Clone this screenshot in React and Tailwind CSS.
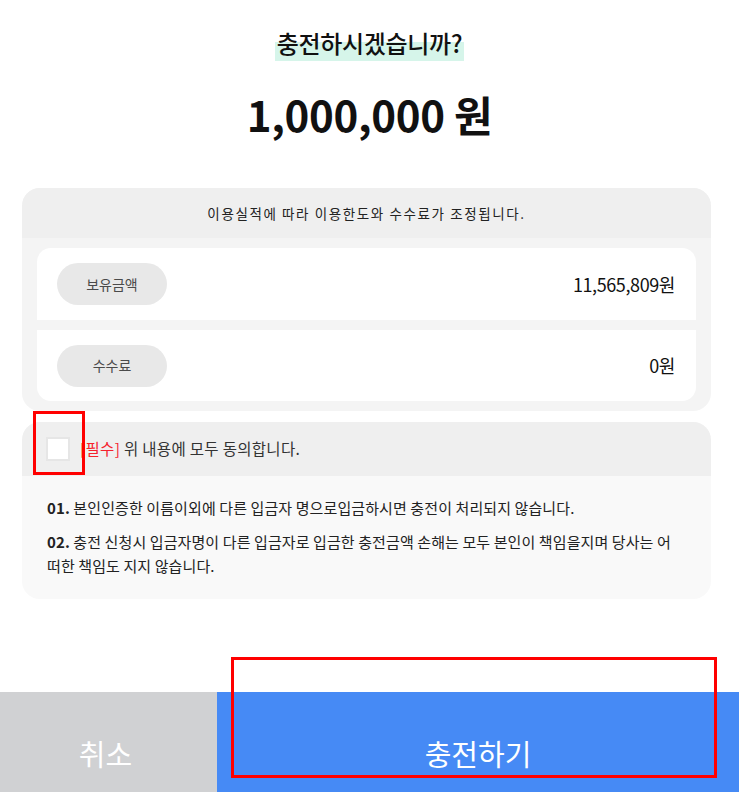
import React, { useState } from 'react';

const font = { fontFamily: '"Noto Sans CJK KR", "Noto Sans", sans-serif' };

const App = () => {
    const [agreed, setAgreed] = useState(false);

    return (
        <div className="relative w-[739px] h-[792px] bg-white flex flex-col overflow-hidden" style={font}>
            {/* Title */}
            <div className="flex flex-col items-center pt-[25px]">
                <h1 className="text-[24px] leading-[36px] font-medium text-[#111] tracking-[-0.3px] bg-[linear-gradient(transparent_46%,#d6f5ea_46%)] px-0.5">
                    충전하시겠습니까?
                </h1>
                <p className="mt-[27px] text-[42px] leading-[52px] font-bold text-[#111] tracking-[-0.3px]">1,000,000 원</p>
            </div>

            {/* Summary card */}
            <div className="ml-[22px] w-[689px] mt-[48px] rounded-[18px] bg-[#f4f4f4] overflow-hidden">
                <div className="h-[50px] bg-[#efefef] flex items-center justify-center text-[13.5px] text-[#222] tracking-[1.6px]">
                    이용실적에 따라 이용한도와 수수료가 조정됩니다.
                </div>
                <div className="px-[15px] pt-[10px] pb-[10px]">
                    <div className="rounded-[14px] bg-white overflow-hidden flex flex-col">
                        <div className="h-[72px] flex items-center justify-between pl-[20px] pr-[21px]">
                            <span className="w-[110px] h-[42px] rounded-full bg-[#e8e8e8] flex items-center justify-center text-[14px] text-[#4a4a4a]">보유금액</span>
                            <span className="text-[18px] text-[#111] tracking-[-0.4px]">11,565,809원</span>
                        </div>
                        <div className="h-[10px] bg-[#f4f4f4]" />
                        <div className="h-[71px] flex items-center justify-between pl-[20px] pr-[21px]">
                            <span className="w-[110px] h-[42px] rounded-full bg-[#e8e8e8] flex items-center justify-center text-[14px] text-[#4a4a4a]">수수료</span>
                            <span className="text-[18px] text-[#111] tracking-[-0.4px]">0원</span>
                        </div>
                    </div>
                </div>
            </div>

            {/* Agreement card */}
            <div className="ml-[22px] w-[689px] mt-[11px] rounded-[18px] bg-[#f9f9f9] overflow-hidden">
                <label className="h-[54px] bg-[#efefef] flex items-center pl-[24px] gap-[10px] cursor-pointer">
                    <input
                        type="checkbox"
                        checked={agreed}
                        onChange={(e) => setAgreed(e.target.checked)}
                        className="appearance-none w-[24px] h-[24px] bg-white border-2 border-[#e6e6e6] checked:bg-[#468af5]"
                    />
                    <span className="text-[15.5px] text-[#333] tracking-[0.3px]">
                        <span className="text-[#f5222d]">[필수]</span> 위 내용에 모두 동의합니다.
                    </span>
                </label>
                <div className="pl-[25px] pr-[28px] pt-[20px] pb-[21px] text-[15px] text-[#222] leading-[24px] tracking-[0.1px] break-all">
                    <p><b className="font-bold">01.</b> 본인인증한 이름이외에 다른 입금자 명으로입금하시면 충전이 처리되지 않습니다.</p>
                    <p className="mt-[10px]"><b className="font-bold">02.</b> 충전 신청시 입금자명이 다른 입금자로 입금한 충전금액 손해는 모두 본인이 책임을지며 당사는 어떠한 책임도 지지 않습니다.</p>
                </div>
            </div>

            {/* Bottom buttons */}
            <div className="mt-auto h-[100px] flex">
                <button className="w-[217px] bg-[#d0d1d3] text-white text-[29px] flex items-start justify-center pt-[40px] pr-[6px]">취소</button>
                <button className="flex-1 bg-[#468af5] text-white text-[29px] flex items-start justify-center pt-[40px]">충전하기</button>
            </div>

            {/* Annotation boxes */}
            <div className="absolute left-[33px] top-[411px] w-[52px] h-[64px] border-[3px] border-[#ff0000] pointer-events-none" />
            <div className="absolute left-[231px] top-[657px] w-[486px] h-[121px] border-[3px] border-[#ff0000] pointer-events-none" />
        </div>
    );
};

export default App;
